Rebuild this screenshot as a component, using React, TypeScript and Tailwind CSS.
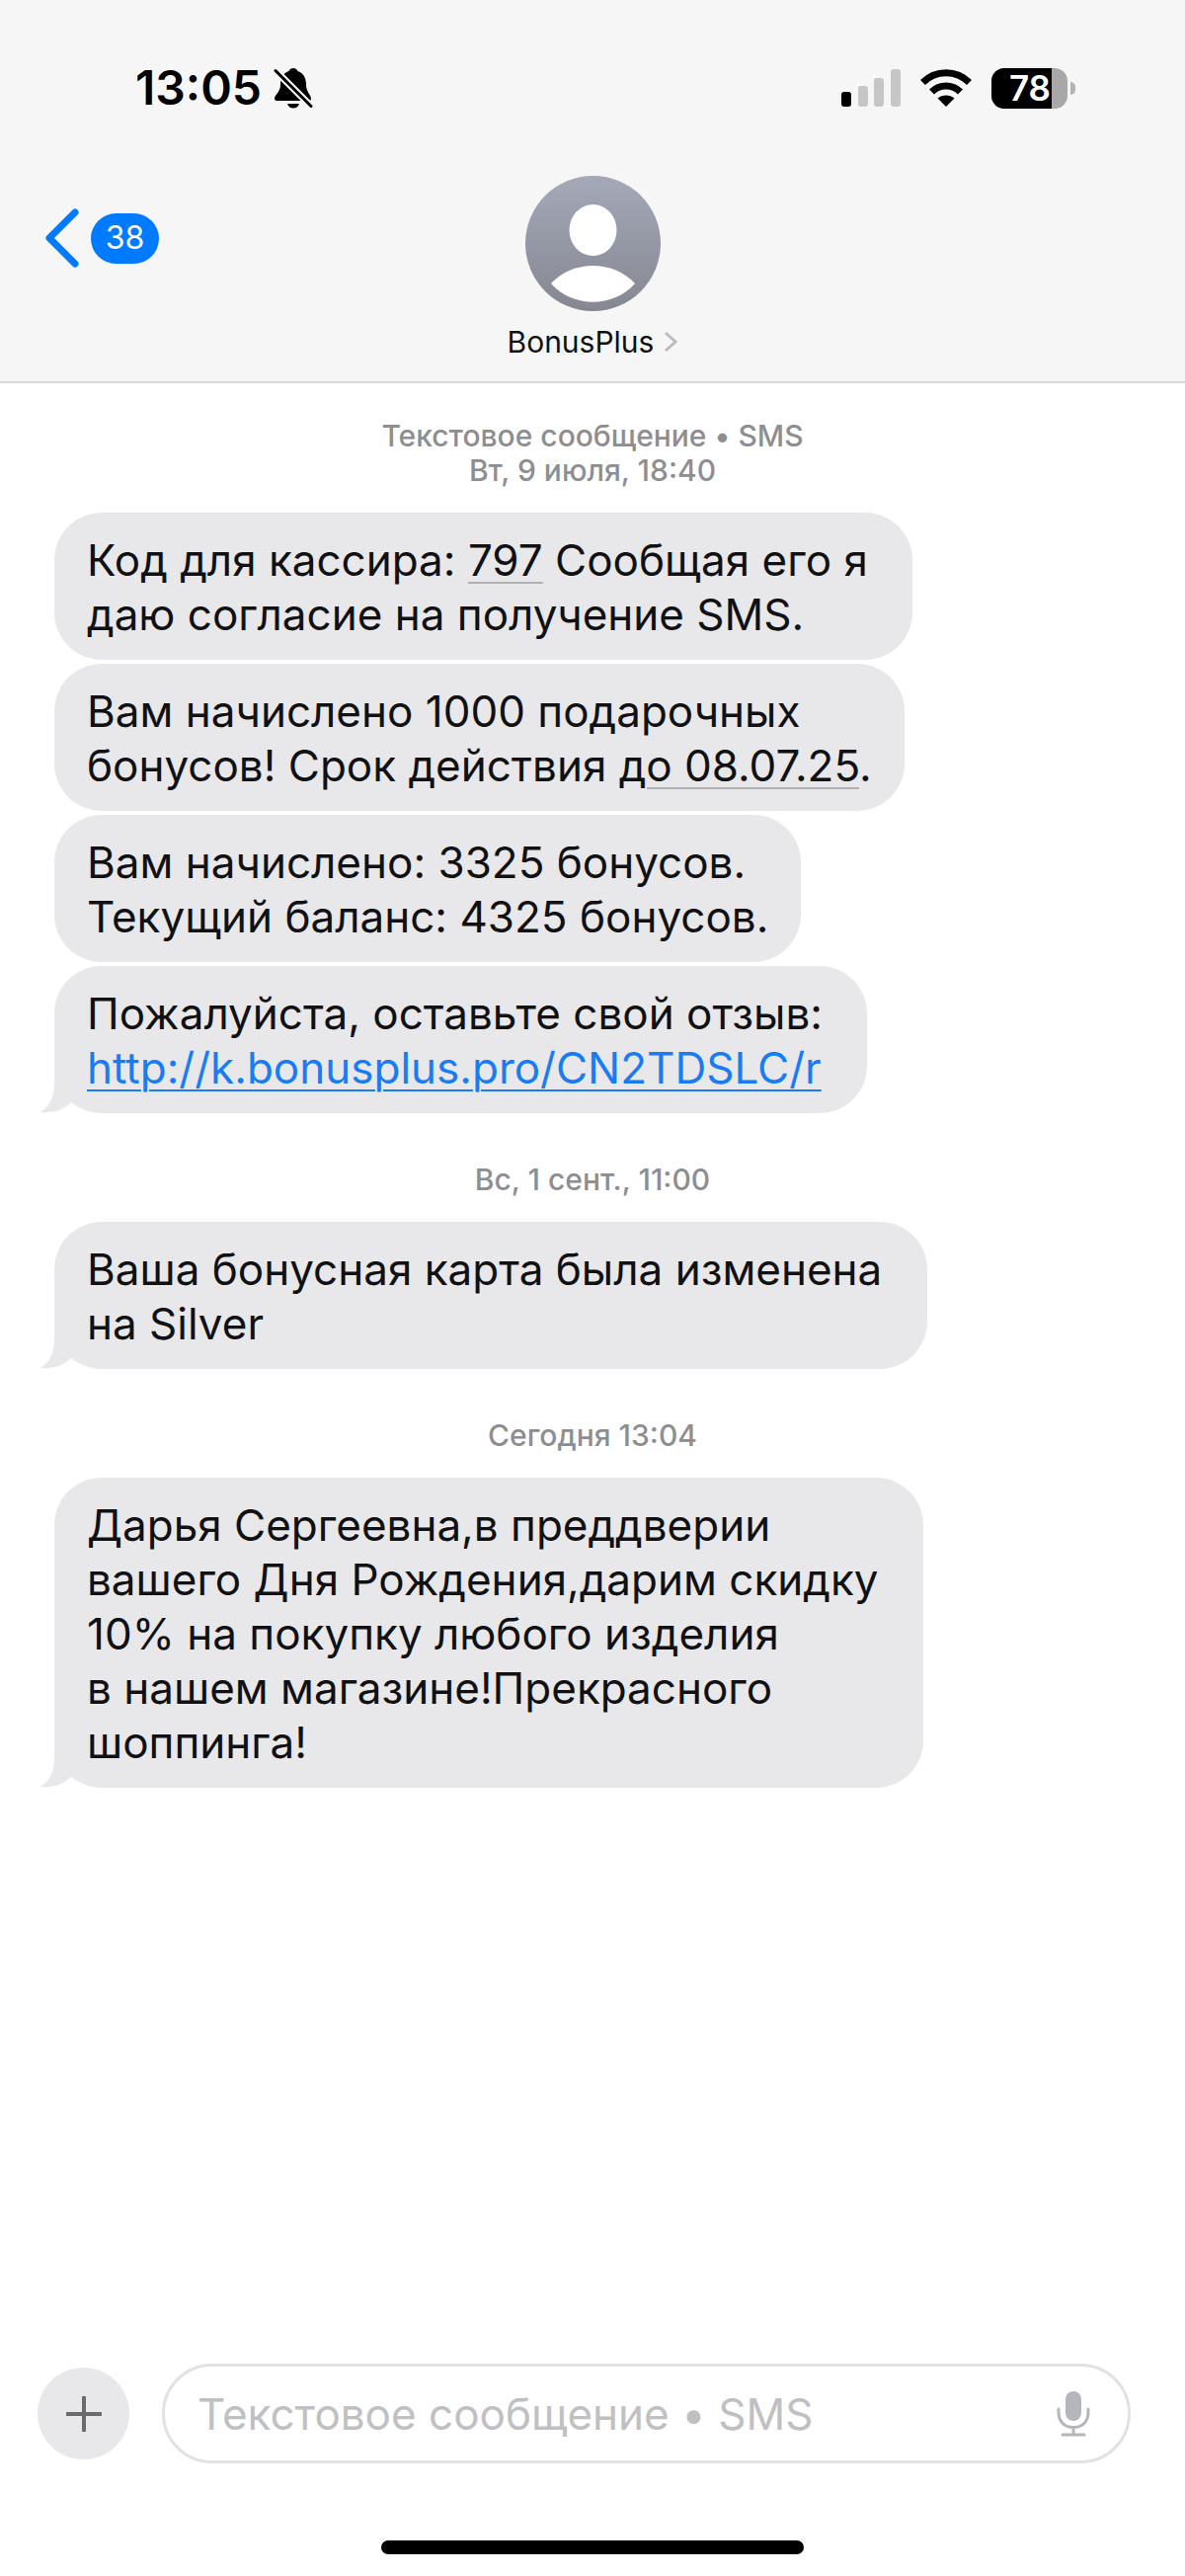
import React from "react";

type Message = {
  id: number;
  lines: React.ReactNode[];
  tail?: boolean;
};

const Detected = ({ children }: { children: React.ReactNode }) => (
  <span className="underline decoration-[#b0b0b3] decoration-2 underline-offset-[6px]">
    {children}
  </span>
);

const firstDay: Message[] = [
  {
    id: 1,
    lines: [
      <>
        {"Код для кассира: "}
        <Detected>797</Detected>
        {" Сообщая его я "}
      </>,
      "даю согласие на получение SMS.",
    ],
  },
  {
    id: 2,
    lines: [
      "Вам начислено 1000 подарочных ",
      <>
        {"бонусов! Срок действия "}
        <Detected>до 08.07.25</Detected>.
      </>,
    ],
  },
  {
    id: 3,
    lines: ["Вам начислено: 3325 бонусов. ", "Текущий баланс: 4325 бонусов."],
  },
  {
    id: 4,
    tail: true,
    lines: [
      "Пожалуйста, оставьте свой отзыв: ",
      <a
        href="#"
        className="text-[#1a7cf5] underline decoration-2 underline-offset-[6px]"
      >
        http://k.bonusplus.pro/CN2TDSLC/r
      </a>,
    ],
  },
];

const september: Message[] = [
  {
    id: 5,
    tail: true,
    lines: ["Ваша бонусная карта была изменена ", "на Silver"],
  },
];

const today: Message[] = [
  {
    id: 6,
    tail: true,
    lines: [
      "Дарья Сергеевна,в преддверии ",
      "вашего Дня Рождения,дарим скидку ",
      "10% на покупку любого изделия ",
      "в нашем магазине!Прекрасного ",
      "шоппинга!",
    ],
  },
];

const Bubble = ({ message }: { message: Message }) => (
  <li className="relative w-fit rounded-[48px] bg-[#e8e8ea] px-[33px] pt-[21px] pb-[18px] text-[44px] leading-[55px] whitespace-pre text-[#111113]">
    {message.lines.map((line, index) => (
      <p key={index}>{line}</p>
    ))}
    {message.tail && (
      <svg
        className="absolute bottom-0 -left-[14px] h-12 w-12 fill-[#e8e8ea]"
        viewBox="0 0 48 48"
        aria-hidden="true"
      >
        <path d="M14 0V18C14 32 9 41 0 47C12 48 22 45 30 38L44 20V0Z" />
      </svg>
    )}
  </li>
);

const Thread = ({ messages }: { messages: Message[] }) => (
  <ul className="flex flex-col gap-1">
    {messages.map((message) => (
      <Bubble key={message.id} message={message} />
    ))}
  </ul>
);

const Stamp = ({ children }: { children: React.ReactNode }) => (
  <p className="text-center text-[30px] leading-[35px] font-medium text-[#8e8e91]">
    {children}
  </p>
);

const StatusBar = () => (
  <div className="flex h-[46px] items-center justify-between pr-[111px] pl-[137px]">
    <div className="flex items-center gap-[12px]">
      <span className="text-[48px] leading-[44px] font-semibold">13:05</span>
      <svg className="h-[42px] w-10" viewBox="0 0 40 42" aria-hidden="true">
        <path d="M20 1c2.500 0 4 1.500 4.500 3C31 6 33 12 33 18c0 7 5 10 5 14 0 1.500-1 2-2 2H4c-1.500 0-3-.5-3-2 0-4 6-7 6-14C7 12 9 6 15.500 4 16 2.500 17.500 1 20 1Z" />
        <path d="M14 37h12c-1 3-3 4.500-6 4.500S15 40 14 37Z" />
        <path d="M1 2.500 39 40.500" stroke="#f6f6f6" strokeWidth="7" />
        <path
          d="M2 3.500 38 39.500"
          stroke="#000"
          strokeWidth="3"
          strokeLinecap="round"
        />
      </svg>
    </div>
    <div className="flex items-center gap-5">
      <svg className="h-10 w-[60px]" viewBox="0 0 60 40" aria-hidden="true">
        <rect x="0" y="24" width="10" height="15" rx="3" />
        <rect x="17" y="18" width="10" height="21" rx="3" fill="#c6c6c6" />
        <rect x="33" y="10" width="10" height="29" rx="3" fill="#c6c6c6" />
        <rect x="50" y="1" width="10" height="38" rx="3" fill="#c6c6c6" />
      </svg>
      <svg className="h-10 w-[52px]" viewBox="0 0 52 40" aria-hidden="true">
        <g fill="none" stroke="#000" strokeWidth="7">
          <path d="M2.500 14.500C15.500 1.500 36.500 1.500 49.500 14.500" />
          <path d="M11.500 24C19.500 16 32.500 16 40.500 24" />
        </g>
        <path d="M26 39 17.500 30.500C22 26.500 30 26.500 34.500 30.500Z" />
      </svg>
      <div className="flex items-center gap-[3px]">
        <div className="flex h-[41px] w-[77px] items-center overflow-hidden rounded-[13px] bg-[#a8a8a8]">
          <span className="flex h-full w-[61px] items-center justify-end bg-black pr-px text-[35px] font-semibold text-white">
            78
          </span>
        </div>
        <div className="h-[13px] w-[5px] rounded-r-[5px] bg-[#b4b4b4]" />
      </div>
    </div>
  </div>
);

const Header = () => (
  <header className="border-b-2 border-[#d8d8da] bg-[#f6f6f6] pt-[66px] pb-5">
    <StatusBar />
    <div className="grid grid-cols-3 items-start px-[45px] pt-[66px]">
      <button
        type="button"
        aria-label="Назад"
        className="mt-[33px] flex items-center gap-3 justify-self-start"
      >
        <svg
          className="h-[60px] w-[35px] fill-none stroke-[#007aff]"
          viewBox="0 0 35 60"
          aria-hidden="true"
        >
          <path
            d="M31 4 5 30 31 56"
            strokeWidth="7"
            strokeLinecap="round"
            strokeLinejoin="round"
          />
        </svg>
        <span className="flex h-[51px] w-[69px] items-center justify-center rounded-full bg-[#007aff] text-[32px] text-white">
          38
        </span>
      </button>
      <button type="button" className="flex flex-col items-center gap-[11px]">
        <svg className="h-[137px] w-[137px]" viewBox="0 0 137 137" aria-hidden="true">
          <defs>
            <linearGradient id="avatar" x1="0" y1="0" x2="0" y2="1">
              <stop offset="0" stopColor="#a4a8b8" />
              <stop offset="1" stopColor="#858891" />
            </linearGradient>
          </defs>
          <circle cx="68.500" cy="68.500" r="68.500" fill="url(#avatar)" />
          <ellipse cx="68.500" cy="55" rx="24" ry="26" fill="#fff" />
          <path
            d="M26 109C48 85 89 85 111 109C89 134 48 134 26 109Z"
            fill="#fff"
          />
        </svg>
        <span className="flex items-center gap-[10px] text-[30px] leading-[40px] text-[#111113]">
          BonusPlus
          <svg
            className="h-[22px] w-[14px] fill-none stroke-[#bcbcbf]"
            viewBox="0 0 14 22"
            aria-hidden="true"
          >
            <path d="M2 2 12 11 2 20" strokeWidth="3" />
          </svg>
        </span>
      </button>
    </div>
  </header>
);

const Composer = () => (
  <form className="flex items-center gap-[33px] pr-[55px] pl-[38px]">
    <button
      type="button"
      aria-label="Добавить"
      className="flex h-[93px] w-[93px] shrink-0 items-center justify-center rounded-full bg-[#e8e8ea]"
    >
      <svg
        className="h-9 w-9 stroke-[#6b6b6e]"
        viewBox="0 0 36 36"
        aria-hidden="true"
      >
        <path d="M18 1V35M1 18H35" strokeWidth="4" strokeLinecap="round" />
      </svg>
    </button>
    <div className="flex h-[101px] flex-1 items-center rounded-full border-[3px] border-[#e2e2e3] pr-[38px] pl-[33px]">
      <input
        type="text"
        aria-label="Текстовое сообщение"
        placeholder="Текстовое сообщение • SMS"
        className="h-full min-w-0 flex-1 bg-transparent text-[44px] outline-none placeholder:text-[#c0c0c3]"
      />
      <button type="button" aria-label="Диктовка">
        <svg className="h-[46px] w-[34px]" viewBox="0 0 34 46" aria-hidden="true">
          <rect x="9" y="0" width="16" height="30" rx="8" fill="#b5b6bb" />
          <path
            d="M2 18V21C2 31 8 36.500 17 36.500S32 31 32 21V18M17 37V44M6 44H28"
            fill="none"
            stroke="#b5b6bb"
            strokeWidth="3"
            strokeLinecap="round"
          />
        </svg>
      </button>
    </div>
  </form>
);

const App = () => {
  return (
    <div className="flex min-h-screen flex-col bg-white font-['Inter','Liberation_Sans',sans-serif] text-black">
      <Header />
      <main className="flex flex-1 flex-col px-[55px] pt-9">
        <Stamp>
          Текстовое сообщение • SMS
          <br />
          Вт, 9 июля, 18:40
        </Stamp>
        <div className="pt-[25px] pb-[50px]">
          <Thread messages={firstDay} />
        </div>
        <Stamp>Вс, 1 сент., 11:00</Stamp>
        <div className="pt-[25px] pb-[50px]">
          <Thread messages={september} />
        </div>
        <Stamp>Сегодня 13:04</Stamp>
        <div className="pt-[25px] pb-[50px]">
          <Thread messages={today} />
        </div>
      </main>
      <footer className="pb-[22px]">
        <Composer />
        <div className="mx-auto mt-[78px] h-[14px] w-[428px] rounded-full bg-black" />
      </footer>
    </div>
  );
};

export default App;
